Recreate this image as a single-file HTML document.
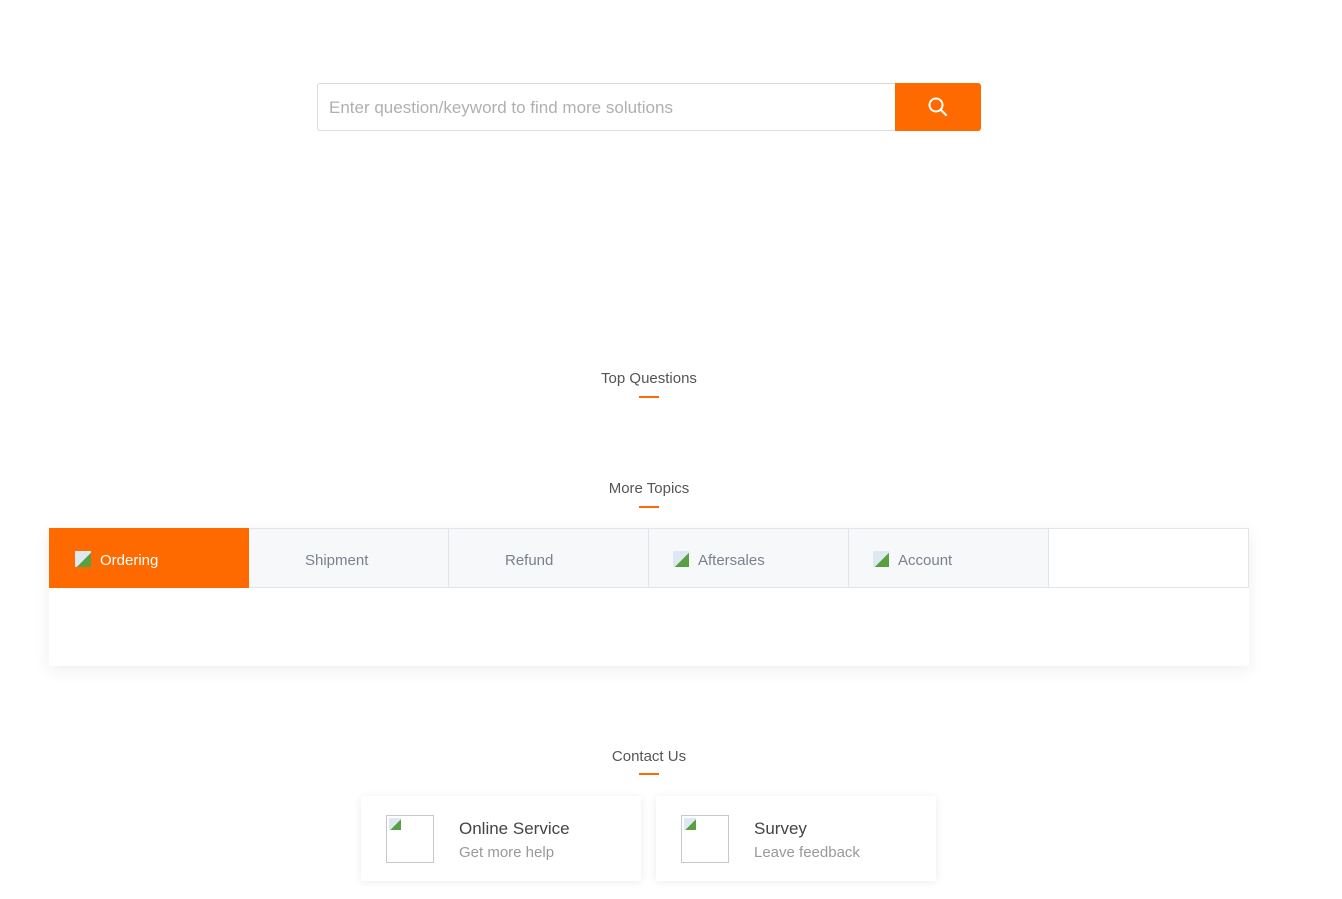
<!DOCTYPE html>
<html><head><meta charset="utf-8"><style>
body{margin:0;width:1342px;height:899px;background:#fff;font-family:"Liberation Sans",sans-serif;position:relative;overflow:hidden}
.abs{position:absolute}
.search{left:317px;top:83px;width:577px;height:46px;border:1px solid #dcdcdc;border-right:none;border-radius:3px 0 0 3px}
.search span{position:absolute;left:11px;top:14px;font-size:17px;color:#b0b0b0}
.btn{left:895px;top:83px;width:86px;height:48px;background:#ff6a00;border-radius:0 3px 3px 0}
.title{width:1342px;left:-22px;text-align:center;font-size:15px;color:#555}
.bar{width:20px;height:2px;background:#ff6a00;left:639px}
.panel{left:49px;top:528px;width:1200px;height:138px;background:#fff;box-shadow:0 4px 16px rgba(0,0,0,0.07)}
.tab{position:absolute;top:0;height:58px;width:199px;background:#f7f8fa;border:1px solid #dfe5ea;border-left:none;font-size:15px;color:#7a8090;line-height:64px}
.img{display:inline-block;width:16px;height:16px;background:linear-gradient(135deg,#dde8f0 55%,#5aa042 55%);vertical-align:-2px;margin-right:9px}
.card{top:796px;width:280px;height:85px;background:#fff;box-shadow:0 1px 8px rgba(0,0,0,0.08)}
.card .ph{position:absolute;left:25px;top:19px;width:46px;height:46px;border:1px solid #c8c8c8}
.card .ph:before{content:"";position:absolute;left:2px;top:2px;width:12px;height:12px;background:linear-gradient(135deg,#dde8f0 55%,#5aa042 55%)}
.card b{position:absolute;left:98px;top:23px;font-weight:normal;font-size:17px;color:#444}
.card i{position:absolute;left:98px;top:48px;font-style:normal;font-size:15px;color:#999}
</style></head><body>
<div class="abs search"><span>Enter question/keyword to find more solutions</span></div>
<div class="abs btn"><svg width="86" height="48"><circle cx="41" cy="22" r="6.5" stroke="#fff" stroke-width="2" fill="none"/><line x1="46" y1="27" x2="51" y2="32" stroke="#fff" stroke-width="2.2" stroke-linecap="round"/></svg></div>
<div class="abs title" style="top:370px">Top Questions</div>
<div class="abs bar" style="top:396px"></div>
<div class="abs title" style="top:480px">More Topics</div>
<div class="abs bar" style="top:506px"></div>
<div class="abs panel">
<div class="tab" style="left:0;background:#ff6a00;border-color:#ff6a00;color:#fff;width:200px"><span style="margin-left:26px"><span class="img"></span>Ordering</span></div>
<div class="tab" style="left:200px"><span style="margin-left:56px">Shipment</span></div>
<div class="tab" style="left:400px"><span style="margin-left:56px">Refund</span></div>
<div class="tab" style="left:600px"><span style="margin-left:24px"><span class="img"></span>Aftersales</span></div>
<div class="tab" style="left:800px"><span style="margin-left:24px"><span class="img"></span>Account</span></div>
<div class="tab" style="left:1000px;background:#fff;width:199px"></div>
</div>
<div class="abs title" style="top:748px">Contact Us</div>
<div class="abs bar" style="top:773px"></div>
<div class="abs card" style="left:361px"><div class="ph"></div><b>Online Service</b><i>Get more help</i></div>
<div class="abs card" style="left:656px"><div class="ph"></div><b>Survey</b><i>Leave feedback</i></div>
</body></html>
